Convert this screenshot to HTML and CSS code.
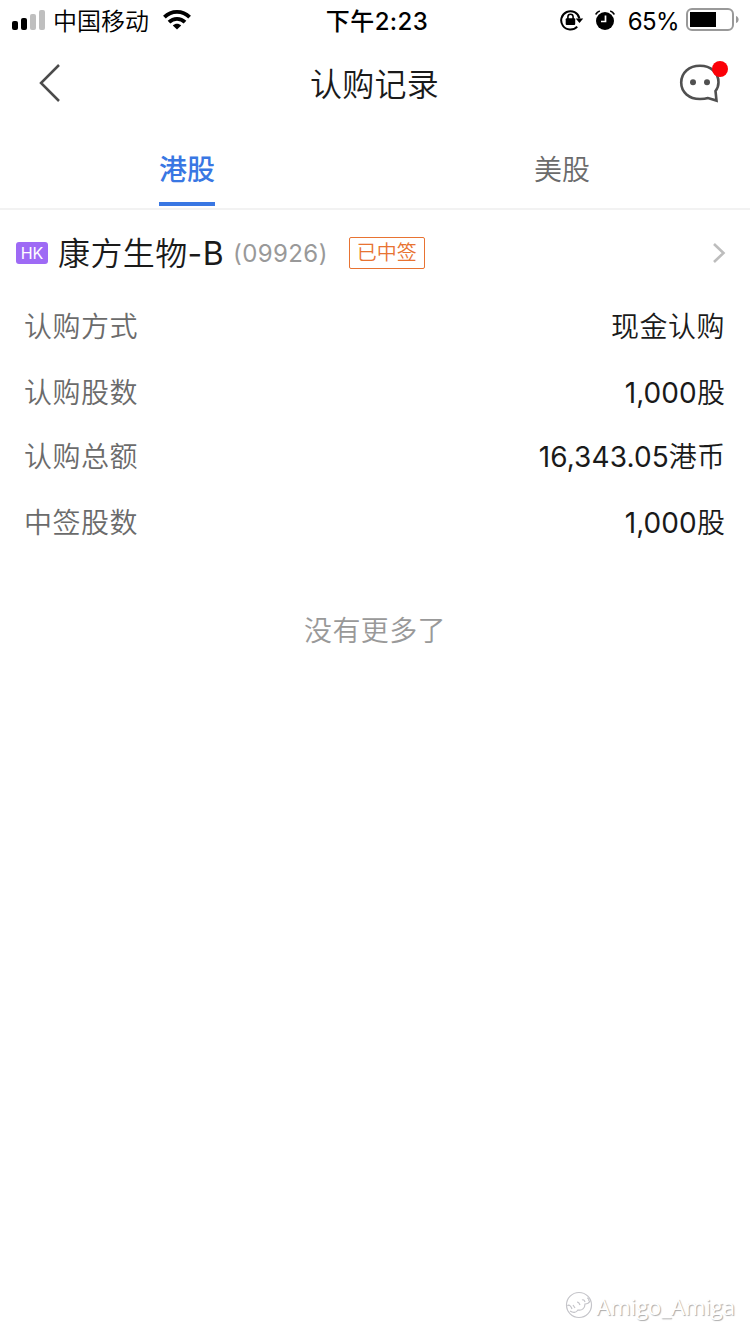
FILE: index.html
```html
<!DOCTYPE html>
<html lang="zh-CN">
<head>
  <meta charset="UTF-8" />
  <meta name="viewport" content="width=device-width, initial-scale=1.0" />
  <title>认购记录</title>
  <link rel="stylesheet" href="styles.css">
</head>
<body>
  <div class="status-bar">
    <div class="status-left">
      <svg class="signal" width="34" height="20" viewBox="0 0 34 20">
        <rect x="0" y="11" width="6" height="9" rx="2" />
        <rect x="9" y="8" width="6" height="12" rx="2" />
        <rect x="18" y="4" width="6" height="16" rx="2" fill="#bfbfbf" />
        <rect x="27" y="0" width="6" height="20" rx="2" fill="#bfbfbf" />
      </svg>
      <span class="carrier">中国移动</span>
      <svg class="wifi" width="28" height="20" viewBox="0 0 28 20" fill="none" stroke="#000" stroke-width="3.8">
        <path d="M1.4 7.2C8.4 .2 19.6 .2 26.6 7.2" />
        <path d="M6 12.2C10.5 7.8 17.5 7.8 22 12.2" />
        <path d="M14 19.6L9.8 15.5C12.2 13.3 15.8 13.3 18.2 15.5Z" fill="#000" stroke="none" />
      </svg>
    </div>
    <div class="time">下午2:23</div>
    <div class="status-right">
      <svg class="lock" width="24" height="22" viewBox="0 0 24 22">
        <path d="M17.2 17.6A9.2 9.2 0 1 1 19.4 9.5" fill="none" stroke="#000" stroke-width="2" />
        <path d="M15.7 9.5H23.2L19.5 14Z" />
        <rect x="5.7" y="9.3" width="9.5" height="6.7" rx="1" />
        <path d="M7.9 10V7.8A2.6 2.6 0 0 1 13.1 7.8V10" fill="none" stroke="#000" stroke-width="1.6" />
      </svg>
      <svg class="alarm" width="20" height="20" viewBox="0 0 20 20">
        <circle cx="10" cy="11" r="9" />
        <path d="M.8 4.5Q2 1.8 4.8 1M19.2 4.5Q18 1.8 15.2 1" fill="none" stroke="#000" stroke-width="1.8" />
        <path d="M10.5 5.5V11.5H6" fill="none" stroke="#fff" stroke-width="1.7" />
      </svg>
      <span class="percent">65%</span>
      <svg class="battery" width="54" height="24" viewBox="0 0 54 24">
        <rect x="1" y="1" width="46" height="21" rx="5" fill="none" stroke="#999" stroke-width="2" />
        <rect x="4" y="4" width="26" height="15" />
        <path d="M50 8C53.5 9 53.5 14 50 15Z" fill="#999" />
      </svg>
    </div>
  </div>

  <div class="nav-bar">
    <svg class="back" width="24" height="40" viewBox="0 0 24 40">
      <path d="M21 2L3 20L21 38" fill="none" stroke="#4b4b4b" stroke-width="2.5" />
    </svg>
    <h1>认购记录</h1>
    <svg class="chat" width="50" height="44" viewBox="0 0 50 44">
      <path d="M36.5 30L37.5 39.6L29 37C26.5 37.8 24 38 21 38C10 38 2.2 31.3 2.2 21.6C2.2 11.8 10 4.8 21 4.8C32 4.8 39.5 11.8 39.5 21.3C39.5 24.8 38.5 27.6 36.5 30Z" fill="none" stroke="#505050" stroke-width="2.6" />
      <circle cx="14" cy="21.2" r="3" fill="#505050" />
      <circle cx="28" cy="21.2" r="3" fill="#505050" />
      <circle cx="41" cy="8" r="8" fill="#fb0007" />
    </svg>
  </div>

  <div class="tabs">
    <div class="tab"><span class="tab-label active">港股</span></div>
    <div class="tab"><span class="tab-label">美股</span></div>
  </div>

  <div class="stock">
    <span class="market">HK</span>
    <span class="name">康方生物<span class="num">-B</span></span>
    <span class="code">(09926)</span>
    <span class="tag">已中签</span>
    <svg class="arrow" width="14" height="22" viewBox="0 0 14 22">
      <path d="M2 2L11.5 11L2 20" fill="none" stroke="#bdbdbd" stroke-width="2.6" />
    </svg>
  </div>

  <div class="details">
    <div class="row"><span class="label">认购方式</span><span class="value spaced">现金认购</span></div>
    <div class="row"><span class="label">认购股数</span><span class="value"><span class="num">1,000</span>股</span></div>
    <div class="row"><span class="label">认购总额</span><span class="value"><span class="num">16,343.05</span>港币</span></div>
    <div class="row"><span class="label">中签股数</span><span class="value"><span class="num">1,000</span>股</span></div>
  </div>

  <div class="no-more">没有更多了</div>

  <div class="watermark">
    <svg width="28" height="28" viewBox="0 0 28 28" fill="none" stroke="#c4c4c9" stroke-width="1.2">
      <circle cx="14" cy="14" r="12.5" />
      <path d="M2.500 15C4 13 6 15 7 18M8 14L10 17M12 11Q14 11 15 14M17 9Q19 8 20 11M22 7Q24 7 24 10M5 20C8 22 11 22 13 19C17 20 20 17 20 13C22 13 24 12 25 10" />
    </svg>
    <span>Amigo_Amiga</span>
  </div>
</body>
</html>
```
FILE: styles.css
```css
* {
  box-sizing: border-box;
}
body {
  margin: 0;
  height: 1334px;
  display: flex;
  flex-direction: column;
  background-color: #fff;
  color: #1a1a1a;
  font-family: Inter, "Noto Sans CJK SC", sans-serif;
  font-size: 28px;
  font-weight: 350;
  white-space: nowrap;
}
svg {
  display: block;
  flex: none;
}
.num {
  font-weight: 400;
}
.status-bar {
  height: 40px;
  display: grid;
  grid-template-columns: 1fr auto 1fr;
  align-items: center;
  padding: 0 10px 0 12px;
  color: #000;
  font-size: 24px;
  line-height: 40px;
}
.status-left, .status-right {
  display: flex;
  align-items: center;
}
.status-right {
  justify-content: flex-end;
}
.carrier {
  margin-left: 7px;
  padding-top: 3px;
  line-height: 37px;
}
.wifi {
  margin-left: 14px;
}
.time {
  padding: 3px 0 0 2px;
  font-weight: 500;
  line-height: 37px;
  letter-spacing: 0.4px;
}
.lock {
  margin-right: 11px;
}
.percent {
  margin-left: 13px;
  padding-top: 3px;
  font-weight: 400;
  line-height: 37px;
  letter-spacing: -0.6px;
}
.battery {
  margin-left: 7px;
}
.nav-bar {
  height: 88px;
  display: flex;
  align-items: center;
  justify-content: space-between;
  padding: 0 21px 2px 38px;
}
.back {
  margin-right: 8px;
}
h1 {
  margin: 0;
  padding-top: 4px;
  font-size: 32px;
  font-weight: 350;
  line-height: 48px;
  letter-spacing: 0.3px;
}
.tabs {
  height: 82px;
  display: flex;
  border-bottom: 2px solid #f2f2f2;
}
.tab {
  flex: 1;
  display: flex;
  justify-content: center;
  padding-right: 1px;
  color: #6b6b6b;
}
.tab-label {
  height: 78px;
  line-height: 84px;
}
.active {
  color: #3977e3;
  font-weight: 500;
  border-bottom: 4px solid #3977e3;
}
.stock {
  height: 86px;
  display: flex;
  align-items: center;
  padding: 0 24px 0 16px;
}
.market {
  width: 32px;
  height: 22px;
  border-radius: 3px;
  background-color: #9e6af5;
  color: #fff;
  font-size: 16px;
  font-weight: 400;
  line-height: 23px;
  text-align: center;
}
.name {
  margin-left: 10px;
  padding-bottom: 4px;
  font-size: 32px;
  letter-spacing: 0.4px;
}
.code {
  margin-left: 9px;
  color: #999;
  font-size: 24px;
  font-weight: 400;
  letter-spacing: 0.4px;
}
.tag {
  width: 76px;
  height: 32px;
  margin-left: 21px;
  border: 1px solid #e87332;
  border-radius: 2px;
  color: #e87332;
  font-size: 20px;
  line-height: 31px;
  text-align: center;
}
.arrow {
  margin-left: auto;
}
.details {
  padding: 0 25px 0 24px;
}
.row {
  height: 64px;
  display: flex;
  align-items: center;
  justify-content: space-between;
  padding-bottom: 2px;
  line-height: 40px;
}
.row:nth-child(even) {
  height: 66px;
  padding-top: 2px;
}
.label, .spaced {
  letter-spacing: 0.5px;
}
.label {
  color: #6b6b6b;
}
.value {
  letter-spacing: 0.1px;
}
.spaced {
  letter-spacing: 0.5px;
}
.no-more {
  margin-top: 55px;
  color: #999;
  line-height: 40px;
  letter-spacing: 0.4px;
  text-align: center;
}
.watermark {
  margin-top: auto;
  height: 56px;
  display: flex;
  align-items: center;
  justify-content: flex-end;
  padding-right: 15px;
  color: #fff;
  font-family: "Open Sans", sans-serif;
  font-size: 22px;
  font-weight: 400;
  text-shadow: 1px 1px 1px #aaa;
}
.watermark svg {
  margin: 0 3px 3px 0;
}
```
